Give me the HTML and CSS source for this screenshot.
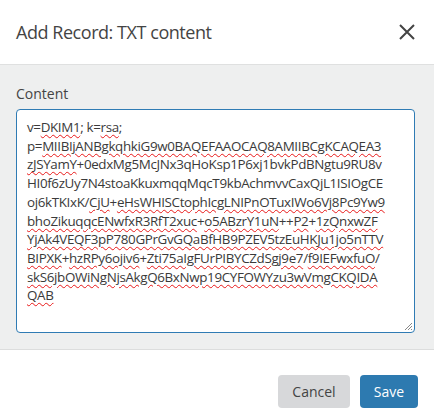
FILE: index.html
```html
<!DOCTYPE html>
<html>
<head>
<meta charset="utf-8">
<link rel="stylesheet" href="styles.css">
</head>
<body>
<div class="modal">
  <div class="header">
    <h1 class="title">Add Record: TXT content</h1>
    <button class="close" aria-label="Close">
      <svg width="16" height="16" viewBox="0 0 16 16"><path d="M1 1L15 15M15 1L1 15" stroke="#444" stroke-width="2" fill="none"/></svg>
    </button>
  </div>
  <div class="body">
    <label class="label">Content</label>
    <div class="textarea">
      <div class="line">v=<span class="sp">DKIM1</span>; k=<span class="sp">rsa</span>;</div>
      <div class="line">p=<span class="sp">MIIBIjANBgkqhkiG9w0BAQEFAAOCAQ8AMIIBCgKCAQEA3</span></div>
      <div class="line"><span class="sp">zJSYamY</span>+0edxMg5McJNx3qHoKsp1P6xj1bvkPdBNgtu9RU8v</div>
      <div class="line">HI0f6zUy7N4stoaKkuxmqqMqcT9kbAchmvvCaxQjL1ISIOgCE</div>
      <div class="line">oj6kTKIxK/<span class="sp">CjU</span>+<span class="sp">eHsWHISCtophIcgLNIPnOTuxIWo6Vj8Pc9Yw9</span></div>
      <div class="line"><span class="sp">bhoZikuqqcENwfxR3RfT2xuc</span>+<span class="sp">o5ABzrY1uN</span>++<span class="sp">P2</span>+<span class="sp">1zQnxwZF</span></div>
      <div class="line"><span class="sp">YjAk4VEQF3pP780GPrGvGQaBfHB9PZEV5tzEuHKJu1jo5nTTV</span></div>
      <div class="line"><span class="sp">BIPXK</span>+<span class="sp">hzRPy6ojiv6</span>+<span class="sp">Zti75aIgFUrPIBYCZdSgj9e7</span>/<span class="sp">f9IEFwxfuO</span>/</div>
      <div class="line"><span class="sp">skS6jbOWiNgNjsAkgQ6BxNwp19CYFOWYzu3wVmgCKQIDA</span></div>
      <div class="line"><span class="sp">QAB</span></div>
      <svg class="grip" width="10" height="10" viewBox="0 0 10 10"><path d="M9 2L2 9M9 5L5 9M9 8L8 9" stroke="#888" stroke-width="1" fill="none"/></svg>
    </div>
  </div>
  <div class="footer">
    <button class="btn btn-cancel">Cancel</button>
    <button class="btn btn-save">Save</button>
  </div>
</div>
</body>
</html>
```
FILE: styles.css
```css
html, body {
  margin: 0;
  padding: 0;
  background: #ffffff;
  font-family: "Open Sans", "Noto Sans", "Liberation Sans", sans-serif;
  color: #444;
}

.modal {
  width: 434px;
  height: 420px;
  display: flex;
  flex-direction: column;
}

.header {
  height: 65px;
  box-sizing: border-box;
  padding: 0 19px 0 16px;
  display: flex;
  align-items: center;
  justify-content: space-between;
  border-bottom: 1px solid #dfe0e0;
}

.title {
  margin: 0;
  font-size: 18px;
  font-weight: 400;
  color: #444;
  letter-spacing: -0.45px;
}

.close {
  border: 0;
  background: none;
  padding: 0;
  width: 16px;
  height: 16px;
  display: flex;
  cursor: pointer;
}

.body {
  background: #eeefef;
  height: 285px;
  box-sizing: border-box;
  padding: 19px 19px 16px 16px;
  display: flex;
  flex-direction: column;
  border-bottom: 1px solid #dcdddd;
}

.label {
  font-size: 14px;
  line-height: 20px;
  color: #444;
  margin-bottom: 5px;
}

.textarea {
  position: relative;
  background: #fff;
  border: 1px solid #2f7bb4;
  border-radius: 4px;
  height: 225px;
  box-sizing: border-box;
  padding: 8px 10px;
  font-size: 13.4px;
  line-height: 18.7px;
  color: #3a3a3a;
  overflow: hidden;
}

.line {
  white-space: nowrap;
  letter-spacing: -0.35px;
}

.sp {
  text-decoration: underline wavy #e81818;
  text-decoration-thickness: 1px;
  text-underline-offset: 2px;
}

.grip {
  position: absolute;
  right: 1px;
  bottom: 1px;
}

.footer {
  flex: 1;
  display: flex;
  justify-content: flex-end;
  align-items: flex-start;
  gap: 10px;
  padding: 25px 16px 0 0;
}

.btn {
  height: 33px;
  border: 0;
  border-radius: 4px;
  font-family: "Open Sans", "Noto Sans", "Liberation Sans", sans-serif;
  font-size: 14px;
  padding: 0 12px;
  cursor: pointer;
}

.btn-cancel {
  background: #d7d8da;
  color: #444;
  width: 72px;
}

.btn-save {
  background: #2d7ab0;
  color: #fff;
  width: 58px;
}
```
